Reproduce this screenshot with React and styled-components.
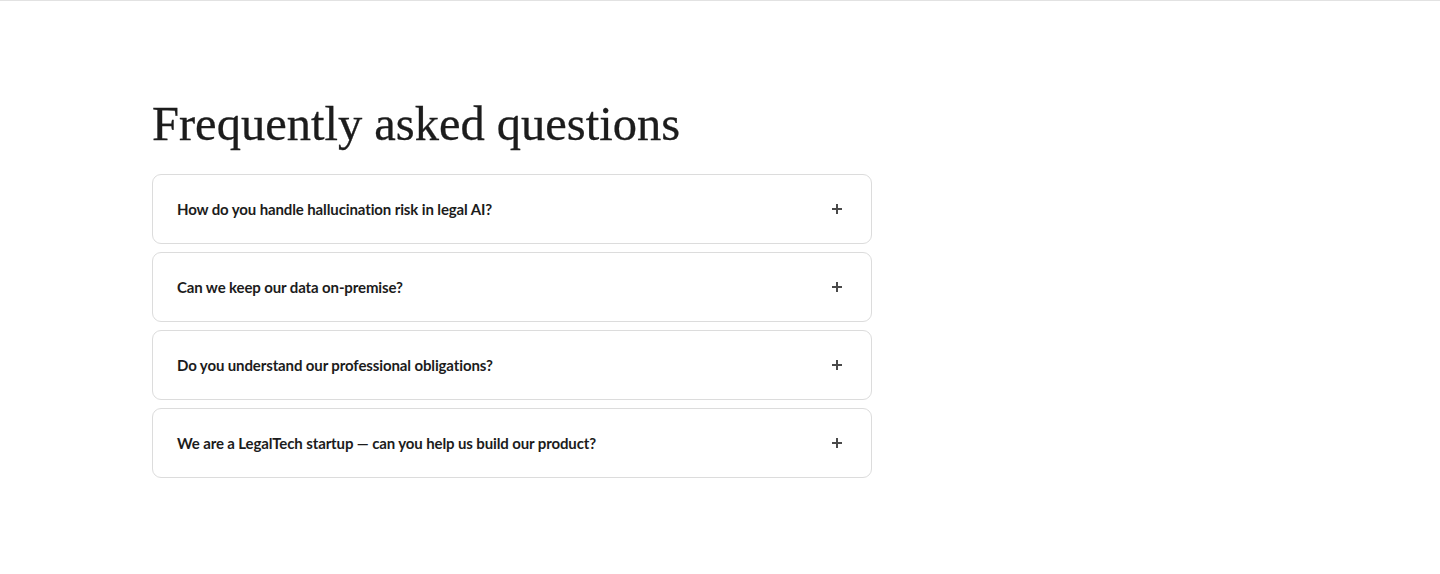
import styled, { createGlobalStyle } from "styled-components";

const GlobalStyle = createGlobalStyle`
  body {
    margin: 0;
    background: #fff;
    font-family: "Lato", "Liberation Sans", sans-serif;
    color: #1a1a1a;
  }
`;

const Section = styled.section`
  border-top: 1px solid #e2e2e2;
  height: 573px;
  padding: 95px 152px 0;
  box-sizing: border-box;
`;

const Inner = styled.div`
  width: 720px;
`;

const Title = styled.h2`
  margin: 0 0 22px;
  font-family: "Liberation Serif", "DejaVu Serif", serif;
  font-weight: 400;
  font-size: 48.5px;
  line-height: 56px;
  color: #1c1c1c;
  -webkit-text-stroke: 0.3px #1c1c1c;
`;

const List = styled.div`
  display: flex;
  flex-direction: column;
  gap: 8px;
`;

const Item = styled.button`
  display: flex;
  align-items: center;
  justify-content: space-between;
  width: 100%;
  height: 70px;
  padding: 0 29px 0 24px;
  box-sizing: border-box;
  background: #fff;
  border: 1px solid #dcdcdc;
  border-radius: 9px;
  cursor: pointer;
  text-align: left;
`;

const Question = styled.span`
  font-family: "Lato", "Liberation Sans", sans-serif;
  font-size: 15px;
  font-weight: 700;
  letter-spacing: -0.12px;
  color: #1c1c1c;
`;

const Plus = () => (
  <svg width="10" height="10" viewBox="0 0 10 10">
    <path d="M5 0v10M0 5h10" stroke="#4a4a4a" strokeWidth="2" />
  </svg>
);

const questions = [
  "How do you handle hallucination risk in legal AI?",
  "Can we keep our data on-premise?",
  "Do you understand our professional obligations?",
  "We are a LegalTech startup \u2014 can you help us build our product?",
];

export default function App() {
  return (
    <>
      <GlobalStyle />
      <Section>
        <Inner>
          <Title>Frequently asked questions</Title>
          <List>
            {questions.map((q) => (
              <Item key={q}>
                <Question>{q}</Question>
                <Plus />
              </Item>
            ))}
          </List>
        </Inner>
      </Section>
    </>
  );
}
